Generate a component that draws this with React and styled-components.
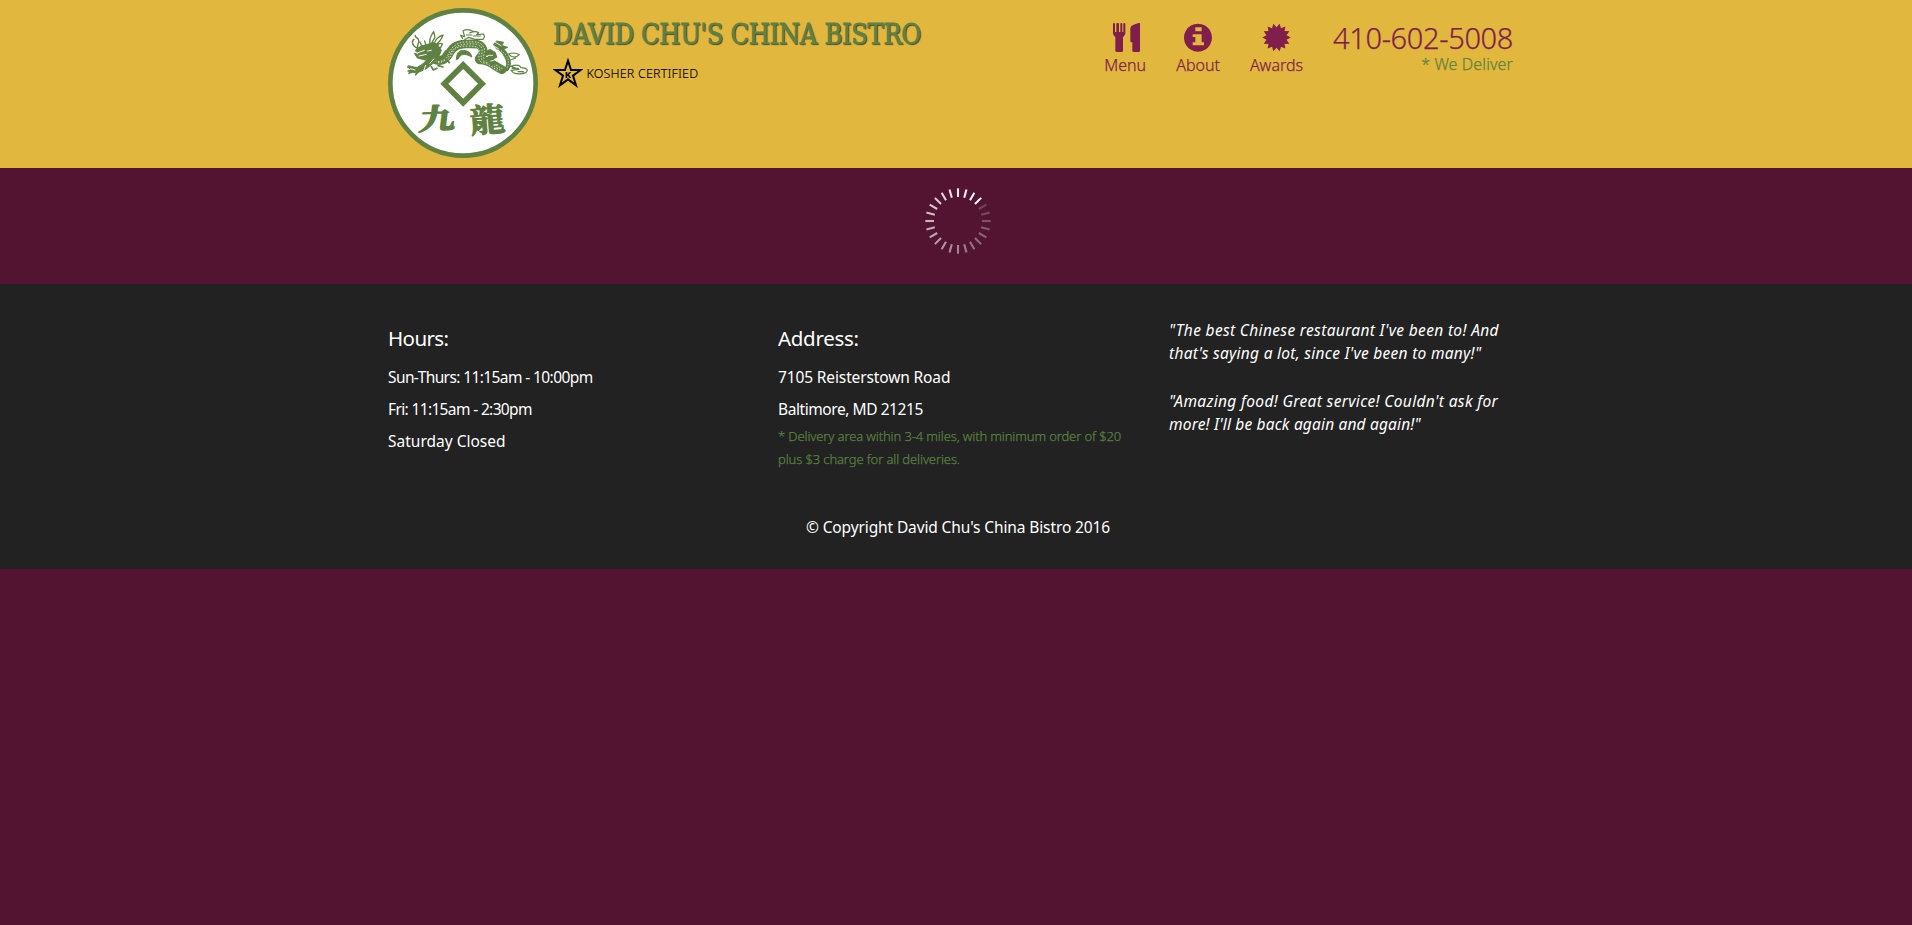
import React from "react";
import styled, { createGlobalStyle } from "styled-components";

const green = "#5f8141";
const plum = "#801e4c";

const GlobalStyle = createGlobalStyle`
  * { box-sizing: border-box; }
  body {
    margin: 0;
    background: #521430;
    color: #fff;
    font-family: "Noto Sans", "Open Sans", sans-serif;
    font-size: 15.5px;
    overflow: hidden;
  }
  a { color: inherit; text-decoration: none; }
  p, h1, h4 { margin: 0; font-weight: 400; }
`;

const Container = styled.div`
  width: 1170px;
  margin: 0 auto;
  padding: 0 15px;
  position: relative;
  left: 2px;
`;

const Header = styled.header`
  height: 168px;
  background: #e2b73d;
`;

const HeaderRow = styled(Container)`
  display: flex;
  align-items: flex-start;
`;

const LogoLink = styled.a`
  margin-top: 8px;
  width: 150px;
  height: 150px;
  svg { display: block; }
`;

const Brand = styled.div`
  padding: 18px 0 0 15px;
`;

const Title = styled.h1`
  font-family: "DejaVu Serif Condensed", "DejaVu Serif", serif;
  font-stretch: condensed;
  font-size: 27px;
  line-height: 33px;
  letter-spacing: ${(p) => p.$spacing}px;
  color: ${green};
  -webkit-text-stroke: 0.8px ${green};
  text-shadow: 1px 1px 1px #333;
  white-space: nowrap;
`;

const Kosher = styled.p`
  display: flex;
  align-items: center;
  gap: 3.5px;
  height: 30px;
  margin-top: 7px;
  color: #000;
  font-size: 12.5px;
  font-weight: 300;
  letter-spacing: 0.17px;
  -webkit-text-stroke: 0.15px #000;
`;

const Nav = styled.nav`
  display: flex;
  gap: 30px;
  margin-left: auto;
  margin-right: 15px;
  padding-top: 23px;
  color: ${plum};
  font-size: 16px;
  font-weight: 300;
  -webkit-text-stroke: 0.25px currentColor;
`;

const NavItem = styled.a`
  display: flex;
  flex-direction: column;
  align-items: center;
  line-height: 22px;
  svg { display: block; margin: 0 0 2px ${(p) => p.$shift || 0}px; }
`;

const Contact = styled.div`
  display: flex;
  flex-direction: column;
  align-items: flex-end;
`;

const Phone = styled.div`
  font-size: 29px;
  line-height: 30px;
  letter-spacing: -0.36px;
`;

const Deliver = styled.div`
  font-size: 16px;
  line-height: 22px;
  letter-spacing: 0.12px;
  color: ${green};
`;

const Main = styled.main`
  height: 116px;
  padding-top: 17px;
  padding-left: 4px;
  display: flex;
  justify-content: center;
`;

const Footer = styled.footer`
  height: 285px;
  padding-top: 34px;
  background: #222;
`;

const Columns = styled(Container)`
  display: grid;
  grid-template-columns: repeat(3, 390px);
  height: 176px;
`;

const Info = styled.section`
  padding-top: 4px;
`;

const Heading = styled.h4`
  font-size: 20.5px;
  line-height: 32px;
  margin-bottom: 7px;
  letter-spacing: ${(p) => p.$spacing}px;
`;

const Line = styled.p`
  line-height: 32px;
  white-space: nowrap;
  letter-spacing: ${(p) => p.$spacing}px;
`;

const Note = styled.p`
  font-size: 13px;
  font-weight: 300;
  line-height: 23px;
  letter-spacing: -0.12px;
  white-space: nowrap;
  color: #5a8040;
  -webkit-text-stroke: 0.25px #5a8040;
`;

const Quotes = styled.div`
  padding: 1px 0 0 1px;
`;

const Quote = styled.p`
  font-style: italic;
  line-height: 23px;
  margin-bottom: 25px;
`;

const QuoteLine = styled.span`
  display: block;
  white-space: nowrap;
  letter-spacing: ${(p) => p.$spacing}px;
`;

const Copyright = styled(Container)`
  text-align: center;
  line-height: 32px;
  padding-top: 17px;
  letter-spacing: -0.12px;
`;

function Logo() {
  return (
    <svg width="150" height="150" viewBox="24 24 450 450" fill="none" stroke={green} strokeLinecap="round" strokeLinejoin="round">
      <circle cx="249" cy="249" r="218" fill="#fff" strokeWidth="14" />
      {/* body */}
      <path d="M150 172Q178 198 201 176C216 147 225 133 257 132C284 132 302 128 309 146C315 166 297 181 319 187C345 192 355 216 379 207C396 191 378 160 361 144" strokeWidth="14" />
      <path d="M160 176Q185 190 203 168C217 142 228 133 257 132C290 131 302 130 309 148C314 172 290 172 300 180C330 180 345 200 366 209" strokeWidth="26" />
      <path d="M166 183Q190 190 205 163C214 142 230 126 258 126C287 125 304 124 313 146C316 164 302 174 321 182C343 188 353 200 366 205" stroke="#fff" strokeWidth="2.6" strokeDasharray="2 7" />
      <path d="M170 188Q193 190 210 164C219 142 238 133 259 132C285 131 300 131 306 147C308 165 294 178 318 187C336 190 347 203 360 210" stroke="#fff" strokeWidth="2.6" strokeDasharray="2 7" strokeDashoffset="4" />
      <path d="M205 178Q216 166 218 156C228 141 240 139 259 138C283 138 293 139 299 151C299 165 290 178 306 188C326 190 340 204 352 211" stroke="#fff" strokeWidth="2.6" strokeDasharray="2 7" />
      <path d="M229 178C230 153 242 149 257 152C269 155 275 164 275 171C254 158 241 162 235 176Z" fill={green} strokeWidth="3" />
      {/* head, mane and whiskers */}
      <path d="M106 151C120 134 143 136 158 127L173 134L184 151L177 168L164 186L138 207L110 219L83 213L94 209L82 201L112 202L128 192L139 181L112 174L103 160L119 165Z" fill={green} strokeWidth="3" />
      <path d="M112 159L133 151M117 168L139 163M143 153L154 151M131 213L137 196M150 190L161 177M92 206L105 210" stroke="#fff" strokeWidth="3" />
      <path d="M115 150C106 139 119 131 116 121C114 110 104 115 106 106M113 145C95 137 94 123 102 118M126 142L120 126M139 139L134 123M151 136C145 119 153 106 161 95L165 112L156 127M163 130C168 112 180 109 189 105C184 119 177 128 168 133M166 142Q180 125 187 132Q184 144 173 151" strokeWidth="4" />
      <path d="M85 198L99 201M87 220L100 214M107 224L114 216M154 200L160 210L171 205M174 197L189 201M189 165L197 153M193 171L208 188" strokeWidth="5" />
      {/* flames above the back */}
      <path d="M248 116L242 106L254 110L249 92Q265 85 279 94L269 99Q286 91 296 98L290 104L310 102Q317 109 309 118H285L266 112L254 119M259 105H276M281 108H302" strokeWidth="3.5" />
      {/* hind claws and tail */}
      <path d="M315 158L330 149L345 158L350 171L339 177L347 190L332 195L325 181L314 179L328 170Z" fill={green} strokeWidth="4" />
      <path d="M341 132L350 123L371 127L365 136L383 142L367 149L351 147Z" fill={green} strokeWidth="3" />
      <path d="M342 139L355 146M346 127L363 137M324 166H338M332 183L344 180M352 180L364 178" stroke="#fff" strokeWidth="2.5" />
      <path d="M364 153C386 167 392 190 378 207" stroke="#fff" strokeWidth="2.5" strokeDasharray="1 7" />
      <path d="M386 162Q403 155 418 164Q407 175 394 169ZM391 180L407 174M392 199Q417 190 423 203Q450 205 438 218Q417 225 400 218L393 211L417 208ZM397 205H415M414 215H430" strokeWidth="3.5" />
      <path d="M249.5 195L306 251.5L249.5 308L193 251.5Z" strokeWidth="17" strokeLinejoin="miter" />
      <g fill={green} stroke={green} strokeWidth="3" fontFamily='"Noto Serif CJK TC", "Noto Sans CJK TC", serif' fontWeight="700" fontSize="99">
        <text transform="translate(115 390) rotate(-3) skewX(-10) scale(1.1 .86)" strokeWidth="5">九</text>
        <text transform="translate(273 400) rotate(-5) scale(1.06 1)">龍</text>
      </g>
    </svg>
  );
}

function KosherStar() {
  return (
    <svg width="30" height="31" viewBox="0 0 90 93">
      <path d="M45 8L54 36H83L60 53L69 82L45 64L21 82L30 53L7 36H36Z" fill="none" stroke="#000" strokeWidth="6" />
      <text x="45" y="61" textAnchor="middle" fontFamily="Noto Sans, sans-serif" fontWeight="800" fontSize="28">K</text>
    </svg>
  );
}

function CutleryIcon() {
  return (
    <svg width="27" height="29" viewBox="0 0 81 87" fill={plum}>
      <path d="M0 3Q0 0 3 0T6 3V27H10V3Q10 0 13 0H16Q18 0 18 3V27H22V3Q22 0 25 0T28 3V27H31V3Q31 0 34 0T37 3V31Q37 38 30 43V83Q30 87 26 87H11Q7 87 7 83V43Q0 38 0 31Z" />
      <path d="M81 3V83Q81 87 77 87H63Q58 87 58 83V58H55Q52 58 52 54V17Q52 8 62 5L77 0Q81 -1 81 3Z" />
    </svg>
  );
}

function InfoIcon() {
  return (
    <svg width="28" height="29" viewBox="0 0 84 87">
      <path fill={plum} fillRule="evenodd" d="M42 2A42 42 0 1 1 41.9 2ZM34 13V25H53V13ZM26 34V42H34V58H26V67H60V58H53V34Z" />
    </svg>
  );
}

const burstPoints = Array.from({ length: 28 }, (_, i) => {
  const angle = (i * Math.PI) / 14;
  const r = i % 2 ? 10.3 : 14.2;
  return `${(14.5 + r * Math.cos(angle)).toFixed(2)},${(14.5 + r * Math.sin(angle)).toFixed(2)}`;
}).join(" ");

function BurstIcon() {
  return (
    <svg width="29" height="29" viewBox="0 0 29 29">
      <polygon points={burstPoints} fill={plum} />
    </svg>
  );
}

function Spinner() {
  return (
    <svg width="72" height="72" viewBox="-36 -36 72 72" stroke="#fff" strokeWidth="2.1">
      {Array.from({ length: 24 }, (_, i) => {
        const age = (3 - i + 24) % 24;
        return <line key={i} x1="0" y1="-24" x2="0" y2="-32.7" transform={`rotate(${i * 15})`} opacity={1 - age * 0.035} />;
      })}
    </svg>
  );
}

export default function App() {
  return (
    <>
      <GlobalStyle />
      <Header>
        <HeaderRow>
          <LogoLink href="#"><Logo /></LogoLink>
          <Brand>
            <Title $spacing={-0.32}>DAVID CHU'S CHINA BISTRO</Title>
            <Kosher><KosherStar />KOSHER CERTIFIED</Kosher>
          </Brand>
          <Nav>
            <NavItem href="#" $shift={2}><CutleryIcon />Menu</NavItem>
            <NavItem href="#"><InfoIcon />About</NavItem>
            <NavItem href="#"><BurstIcon />Awards</NavItem>
            <Contact>
              <Phone>410-602-5008</Phone>
              <Deliver>* We Deliver</Deliver>
            </Contact>
          </Nav>
        </HeaderRow>
      </Header>
      <Main><Spinner /></Main>
      <Footer>
        <Columns>
          <Info>
            <Heading $spacing={-0.6}>Hours:</Heading>
            <Line $spacing={-0.6}>Sun-Thurs: 11:15am - 10:00pm</Line>
            <Line $spacing={-0.64}>Fri: 11:15am - 2:30pm</Line>
            <Line $spacing={0}>Saturday Closed</Line>
          </Info>
          <Info>
            <Heading $spacing={-0.3}>Address:</Heading>
            <Line $spacing={-0.13}>7105 Reisterstown Road</Line>
            <Line $spacing={-0.43}>Baltimore, MD 21215</Line>
            <Note>
              * Delivery area within 3-4 miles, with minimum order of $20
              <br />
              plus $3 charge for all deliveries.
            </Note>
          </Info>
          <Quotes>
            <Quote>
              <QuoteLine $spacing={0.34}>"The best Chinese restaurant I've been to! And</QuoteLine>
              <QuoteLine $spacing={0.28}>that's saying a lot, since I've been to many!"</QuoteLine>
            </Quote>
            <Quote>
              <QuoteLine $spacing={0.34}>"Amazing food! Great service! Couldn't ask for</QuoteLine>
              <QuoteLine $spacing={0.17}>more! I'll be back again and again!"</QuoteLine>
            </Quote>
          </Quotes>
        </Columns>
        <Copyright>© Copyright David Chu's China Bistro 2016</Copyright>
      </Footer>
    </>
  );
}
